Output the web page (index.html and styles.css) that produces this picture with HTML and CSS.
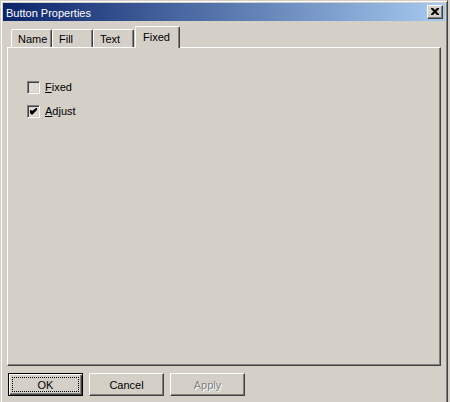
FILE: index.html
```html
<!DOCTYPE html>
<html>
<head>
<meta charset="utf-8">
<link rel="stylesheet" href="styles.css">
</head>
<body>
<div class="window">
  <div class="titlebar">
    <span class="title">Button Properties</span>
    <span class="close"><svg width="8" height="7" viewBox="0 0 8 7"><path d="M0 0h2l2 2 2-2h2v1L5.5 3.5 8 6v1H6L4 5 2 7H0V6l2.5-2.5L0 1z" fill="#000"/></svg></span>
  </div>
  <div class="content">
    <div class="tabs">
      <div class="tab">Name</div>
      <div class="tab">Fill</div>
      <div class="tab">Text</div>
      <div class="tab selected">Fixed</div>
    </div>
    <div class="panel">
      <label class="check"><span class="box"></span><span class="label"><u>F</u>ixed</span></label>
      <label class="check"><span class="box"><svg width="7" height="7" viewBox="0 0 7 7"><path d="M0 2h1l1 1 4-3h1v2L2 7 0 5z" fill="#000"/></svg></span><span class="label"><u>A</u>djust</span></label>
    </div>
    <div class="buttons">
      <div class="btn default"><span class="focus">OK</span></div>
      <div class="btn">Cancel</div>
      <div class="btn disabled">Apply</div>
    </div>
  </div>
</div>
</body>
</html>
```

FILE: styles.css
```css
html, body {
  margin: 0;
  padding: 0;
  background: #d4d0c8;
  width: 450px;
  height: 402px;
  overflow: hidden;
  font-family: "Liberation Sans", Arial, sans-serif;
  font-size: 11px;
  color: #000;
}
.window {
  width: 448px;
  height: 410px;
  box-sizing: border-box;
  border-top: 1px solid #d4d0c8;
  border-left: 1px solid #d4d0c8;
  border-right: 1px solid #404040;
  border-bottom: 1px solid #404040;
  box-shadow: inset 1px 1px 0 #ffffff, inset -1px -1px 0 #808080;
  padding: 2px;
}
.titlebar {
  height: 18px;
  background: linear-gradient(to right, #0a246a, #a6caf0);
  display: flex;
  align-items: center;
  justify-content: space-between;
  padding: 0 2px 0 2px;
}
.title {
  color: #fff;
  font-size: 11px;
  padding-left: 1px;
  margin-top: 1px;
}
.close {
  width: 16px;
  height: 14px;
  box-sizing: border-box;
  background: #d4d0c8;
  border-top: 1px solid #fff;
  border-left: 1px solid #fff;
  border-right: 1px solid #404040;
  border-bottom: 1px solid #404040;
  box-shadow: inset -1px -1px 0 #808080;
  display: flex;
  align-items: center;
  justify-content: center;
  padding: 0 1px 1px 0;
}
.close svg { display: block; }
.content {
  padding: 6px 4px 0 4px;
}
.tabs {
  display: flex;
  align-items: flex-end;
  height: 20px;
  padding-left: 4px;
}
.tab {
  width: 41px;
  height: 18px;
  box-sizing: border-box;
  padding: 1px 0 0 6px;
  border-top: 1px solid #fff;
  border-left: 1px solid #fff;
  border-right: 1px solid #404040;
  border-top-left-radius: 2px;
  border-top-right-radius: 2px;
  box-shadow: inset -1px 0 0 #808080;
  display: flex;
  align-items: center;
  background: #d4d0c8;
}
.tab.selected {
  width: 45px;
  height: 22px;
  margin: 0 0 -1px 1px;
  padding: 0 0 2px 7px;
  position: relative;
  z-index: 1;
}
.panel {
  height: 319px;
  box-sizing: border-box;
  border-top: 1px solid #fff;
  border-left: 1px solid #fff;
  border-right: 1px solid #404040;
  border-bottom: 1px solid #404040;
  box-shadow: inset -1px -1px 0 #808080;
  padding: 33px 0 0 19px;
  display: flex;
  flex-direction: column;
  gap: 11px;
}
.check {
  display: flex;
  align-items: center;
  gap: 5px;
  height: 13px;
}
.box {
  width: 13px;
  height: 13px;
  box-sizing: border-box;
  border-top: 1px solid #808080;
  border-left: 1px solid #808080;
  border-right: 1px solid #fff;
  border-bottom: 1px solid #fff;
  box-shadow: inset 1px 1px 0 #404040, inset -1px -1px 0 #d4d0c8;
  background: #dedbd6;
  display: flex;
  align-items: center;
  justify-content: center;
}
.box svg { display: block; }
.label { line-height: 13px; }
.buttons {
  display: flex;
  gap: 6px;
  padding: 7px 0 0 1px;
}
.btn {
  width: 75px;
  height: 23px;
  box-sizing: border-box;
  border-top: 1px solid #fff;
  border-left: 1px solid #fff;
  border-right: 1px solid #404040;
  border-bottom: 1px solid #404040;
  box-shadow: inset -1px -1px 0 #808080;
  display: flex;
  align-items: center;
  justify-content: center;
  background: #d4d0c8;
}
.btn.default {
  border: 1px solid #000;
  box-shadow: inset 1px 1px 0 #fff, inset -1px -1px 0 #404040, inset -2px -2px 0 #808080;
  padding: 3px;
}
.focus {
  flex: 1;
  align-self: stretch;
  border: 1px dotted #000;
  display: flex;
  align-items: center;
  justify-content: center;
}
.btn.disabled {
  color: #808080;
  text-shadow: 1px 1px 0 #fff;
}
```
